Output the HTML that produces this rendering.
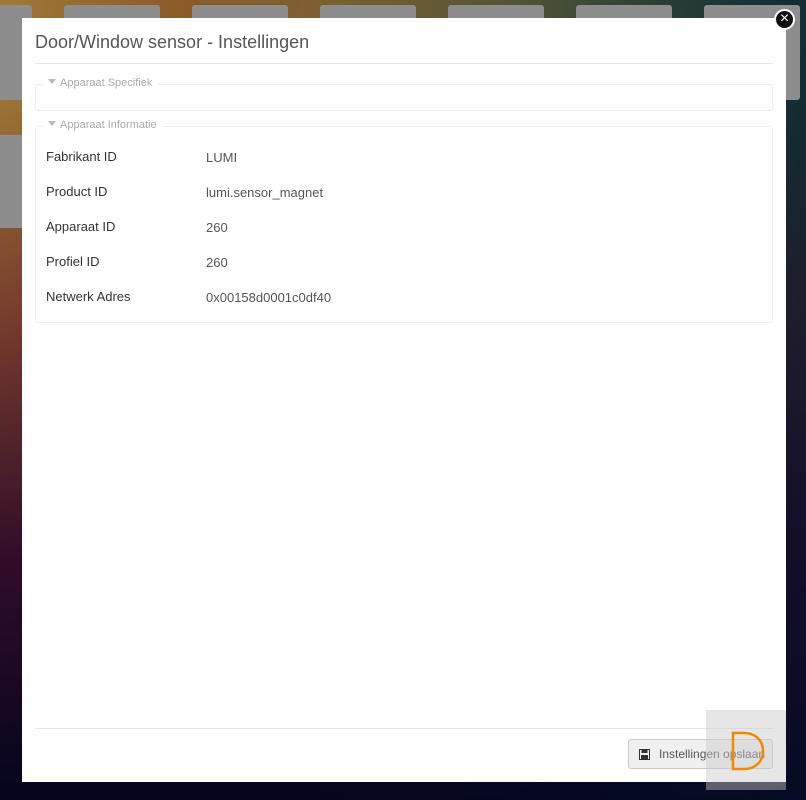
<!DOCTYPE html>
<html><head><style>
*{margin:0;padding:0;box-sizing:border-box}
body{width:806px;height:800px;overflow:hidden;position:relative;font-family:"Liberation Sans",sans-serif;
background:linear-gradient(100deg,#a07838 0%,#8a5a2a 20%,#6a6a3a 55%,#2d5a45 80%,#1d4a3a 100%);}
.bg2{position:absolute;left:0;top:0;width:806px;height:800px;background:linear-gradient(180deg,rgba(0,0,0,0) 0%,rgba(0,0,0,0) 12%,rgba(90,20,40,.55) 40%,rgba(40,5,40,.92) 70%,rgba(5,5,30,1) 100%)}
.bg3{position:absolute;left:0;top:0;width:806px;height:800px;background:linear-gradient(90deg,rgba(0,0,0,0) 40%,rgba(5,15,40,.6) 100%)}
.tile{position:absolute;background:#8d8d8d;border-radius:3px}
.modal{position:absolute;left:22px;top:18px;width:764px;height:764px;background:#fff}
h1{position:absolute;left:13px;top:14px;font-weight:normal;font-size:18px;color:#555}
.hr{position:absolute;left:13px;right:13px;height:1px;background:#e8e8e8}
.fs{position:absolute;left:13px;width:738px;border:1px solid #eee;border-radius:3px}
.lg{position:absolute;top:-8px;left:8px;background:#fff;padding:0 6px 0 4px;font-size:11px;color:#aaa}
.lg:before{content:"";display:inline-block;border:4px solid transparent;border-top:5px solid #bbb;margin-right:4px;vertical-align:-2px}
.row{position:absolute;left:10px;font-size:13px;color:#333}
.val{position:absolute;left:170px;font-size:13px;color:#555}
.close{position:absolute;left:774px;top:9px;width:21px;height:21px;border-radius:50%;background:#111;border:2px solid #fff;color:#fff;text-align:center;line-height:16px;font-size:16px}
.btn{position:absolute;left:628px;top:739px;width:145px;height:30px;background:#f0f0f0;border:1px solid #ccc;border-radius:3px;font-size:12px;color:#555;line-height:28px;padding-left:30px}
.ov{position:absolute;left:706px;top:710px;width:80px;height:80px;background:rgba(200,200,200,.45)}
</style></head><body>
<div class="bg2"></div><div class="bg3"></div>
<div class="tile" style="left:64px;top:5px;width:96px;height:20px"></div>
<div class="tile" style="left:192px;top:5px;width:96px;height:20px"></div>
<div class="tile" style="left:320px;top:5px;width:96px;height:20px"></div>
<div class="tile" style="left:448px;top:5px;width:96px;height:20px"></div>
<div class="tile" style="left:576px;top:5px;width:96px;height:20px"></div>
<div class="tile" style="left:704px;top:5px;width:96px;height:95px"></div>
<div class="tile" style="left:-5px;top:5px;width:37px;height:95px"></div>
<div class="tile" style="left:-5px;top:135px;width:37px;height:93px"></div>
<div class="modal">
<h1>Door/Window sensor - Instellingen</h1>
<div class="hr" style="top:45px"></div>
<div class="fs" style="top:66px;height:27px"><span class="lg">Apparaat Specifiek</span></div>
<div class="fs" style="top:108px;height:197px"><span class="lg">Apparaat Informatie</span>
<div class="row" style="top:22px">Fabrikant ID</div><div class="val" style="top:23px">LUMI</div>
<div class="row" style="top:57px">Product ID</div><div class="val" style="top:58px">lumi.sensor_magnet</div>
<div class="row" style="top:92px">Apparaat ID</div><div class="val" style="top:93px">260</div>
<div class="row" style="top:127px">Profiel ID</div><div class="val" style="top:128px">260</div>
<div class="row" style="top:162px">Netwerk Adres</div><div class="val" style="top:163px">0x00158d0001c0df40</div>
</div>
<div class="hr" style="top:710px"></div>
</div>
<div class="btn"><svg style="position:absolute;left:10px;top:9px" width="11" height="11" viewBox="0 0 11 11"><rect x="0.5" y="0.5" width="10" height="10" fill="none" stroke="#333"/><rect x="2.5" y="1" width="6" height="3" fill="#333"/><rect x="2" y="6" width="7" height="4" fill="#333"/></svg>Instellingen opslaan</div>
<div class="ov"></div>
<svg style="position:absolute;left:730px;top:731px" width="36" height="40" viewBox="0 0 36 40"><path d="M3 2 V38 H14 C26 38 33 30 33 20 C33 10 26 2 14 2 Z" fill="none" stroke="#f08a00" stroke-width="2.5"/></svg>
<div class="close">×</div>
</body></html>
